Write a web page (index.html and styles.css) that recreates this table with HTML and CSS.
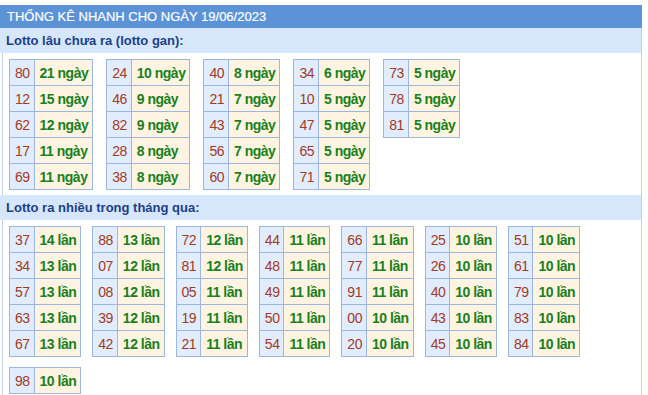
FILE: index.html
```html
<!DOCTYPE html>
<html lang="vi">
<head>
<meta charset="utf-8">
<link rel="stylesheet" href="styles.css">
</head>
<body>
<div class="box">
  <div class="title">THỐNG KÊ NHANH CHO NGÀY 19/06/2023</div>
  <div class="body">
    <div class="sub">Lotto lâu chưa ra (lotto gan):</div>
    <div class="grid g1">
      <table><tr><td class="n">80</td><td class="v">21 ngày</td></tr><tr><td class="n">12</td><td class="v">15 ngày</td></tr><tr><td class="n">62</td><td class="v">12 ngày</td></tr><tr><td class="n">17</td><td class="v">11 ngày</td></tr><tr><td class="n">69</td><td class="v">11 ngày</td></tr></table>
      <table><tr><td class="n">24</td><td class="v">10 ngày</td></tr><tr><td class="n">46</td><td class="v">9 ngày</td></tr><tr><td class="n">82</td><td class="v">9 ngày</td></tr><tr><td class="n">28</td><td class="v">8 ngày</td></tr><tr><td class="n">38</td><td class="v">8 ngày</td></tr></table>
      <table><tr><td class="n">40</td><td class="v">8 ngày</td></tr><tr><td class="n">21</td><td class="v">7 ngày</td></tr><tr><td class="n">43</td><td class="v">7 ngày</td></tr><tr><td class="n">56</td><td class="v">7 ngày</td></tr><tr><td class="n">60</td><td class="v">7 ngày</td></tr></table>
      <table><tr><td class="n">34</td><td class="v">6 ngày</td></tr><tr><td class="n">10</td><td class="v">5 ngày</td></tr><tr><td class="n">47</td><td class="v">5 ngày</td></tr><tr><td class="n">65</td><td class="v">5 ngày</td></tr><tr><td class="n">71</td><td class="v">5 ngày</td></tr></table>
      <table><tr><td class="n">73</td><td class="v">5 ngày</td></tr><tr><td class="n">78</td><td class="v">5 ngày</td></tr><tr><td class="n">81</td><td class="v">5 ngày</td></tr></table>
    </div>
    <div class="sub">Lotto ra nhiều trong tháng qua:</div>
    <div class="grid g2">
      <table><tr><td class="n">37</td><td class="v">14 lần</td></tr><tr><td class="n">34</td><td class="v">13 lần</td></tr><tr><td class="n">57</td><td class="v">13 lần</td></tr><tr><td class="n">63</td><td class="v">13 lần</td></tr><tr><td class="n">67</td><td class="v">13 lần</td></tr></table>
      <table><tr><td class="n">88</td><td class="v">13 lần</td></tr><tr><td class="n">07</td><td class="v">12 lần</td></tr><tr><td class="n">08</td><td class="v">12 lần</td></tr><tr><td class="n">39</td><td class="v">12 lần</td></tr><tr><td class="n">42</td><td class="v">12 lần</td></tr></table>
      <table><tr><td class="n">72</td><td class="v">12 lần</td></tr><tr><td class="n">81</td><td class="v">12 lần</td></tr><tr><td class="n">05</td><td class="v">11 lần</td></tr><tr><td class="n">19</td><td class="v">11 lần</td></tr><tr><td class="n">21</td><td class="v">11 lần</td></tr></table>
      <table><tr><td class="n">44</td><td class="v">11 lần</td></tr><tr><td class="n">48</td><td class="v">11 lần</td></tr><tr><td class="n">49</td><td class="v">11 lần</td></tr><tr><td class="n">50</td><td class="v">11 lần</td></tr><tr><td class="n">54</td><td class="v">11 lần</td></tr></table>
      <table><tr><td class="n">66</td><td class="v">11 lần</td></tr><tr><td class="n">77</td><td class="v">11 lần</td></tr><tr><td class="n">91</td><td class="v">11 lần</td></tr><tr><td class="n">00</td><td class="v">10 lần</td></tr><tr><td class="n">20</td><td class="v">10 lần</td></tr></table>
      <table><tr><td class="n">25</td><td class="v">10 lần</td></tr><tr><td class="n">26</td><td class="v">10 lần</td></tr><tr><td class="n">40</td><td class="v">10 lần</td></tr><tr><td class="n">43</td><td class="v">10 lần</td></tr><tr><td class="n">45</td><td class="v">10 lần</td></tr></table>
      <table><tr><td class="n">51</td><td class="v">10 lần</td></tr><tr><td class="n">61</td><td class="v">10 lần</td></tr><tr><td class="n">79</td><td class="v">10 lần</td></tr><tr><td class="n">83</td><td class="v">10 lần</td></tr><tr><td class="n">84</td><td class="v">10 lần</td></tr></table>
      <table><tr><td class="n">98</td><td class="v">10 lần</td></tr></table>
    </div>
  </div>
</div>
</body>
</html>
```

FILE: styles.css
```css
html, body {
  margin: 0;
  padding: 0;
  background: #ffffff;
}
body {
  font-family: "Liberation Sans", Arial, sans-serif;
}
.box {
  width: 642px;
  padding-top: 5px;
}
.title {
  background: #5b93d6;
  color: #ffffff;
  font-size: 13px;
  height: 23px;
  line-height: 23px;
  padding-left: 7px;
  -webkit-text-stroke: 0.2px #ffffff;
}
.body {
  margin-left: 2px;
  border-left: 1px solid #c9d3df;
  border-right: 1px solid #c9d3df;
}
.sub {
  background: #d6e7fb;
  color: #1d3f85;
  font-weight: bold;
  font-size: 13px;
  height: 25px;
  line-height: 25px;
  padding-left: 6px;
  margin-left: -3px;
}
.grid {
  display: flex;
  flex-wrap: wrap;
  align-items: flex-start;
  padding: 6px 0 5px 6px;
  row-gap: 10px;
}
.g1 { column-gap: 13px; }
.g2 { column-gap: 11px; }
table {
  border-collapse: collapse;
}
td {
  border: 1px solid #9db6dd;
  height: 25px;
  padding: 0;
  font-size: 14px;
  letter-spacing: -0.5px;
  line-height: 16px;
}
td.n {
  background: #e1edfd;
  color: #a23a25;
  padding: 0 4px 0 5px;
  text-align: center;
}
td.v {
  background: #fff4e1;
  color: #19801d;
  font-weight: bold;
  padding: 0 4px 0 5px;
}
```
